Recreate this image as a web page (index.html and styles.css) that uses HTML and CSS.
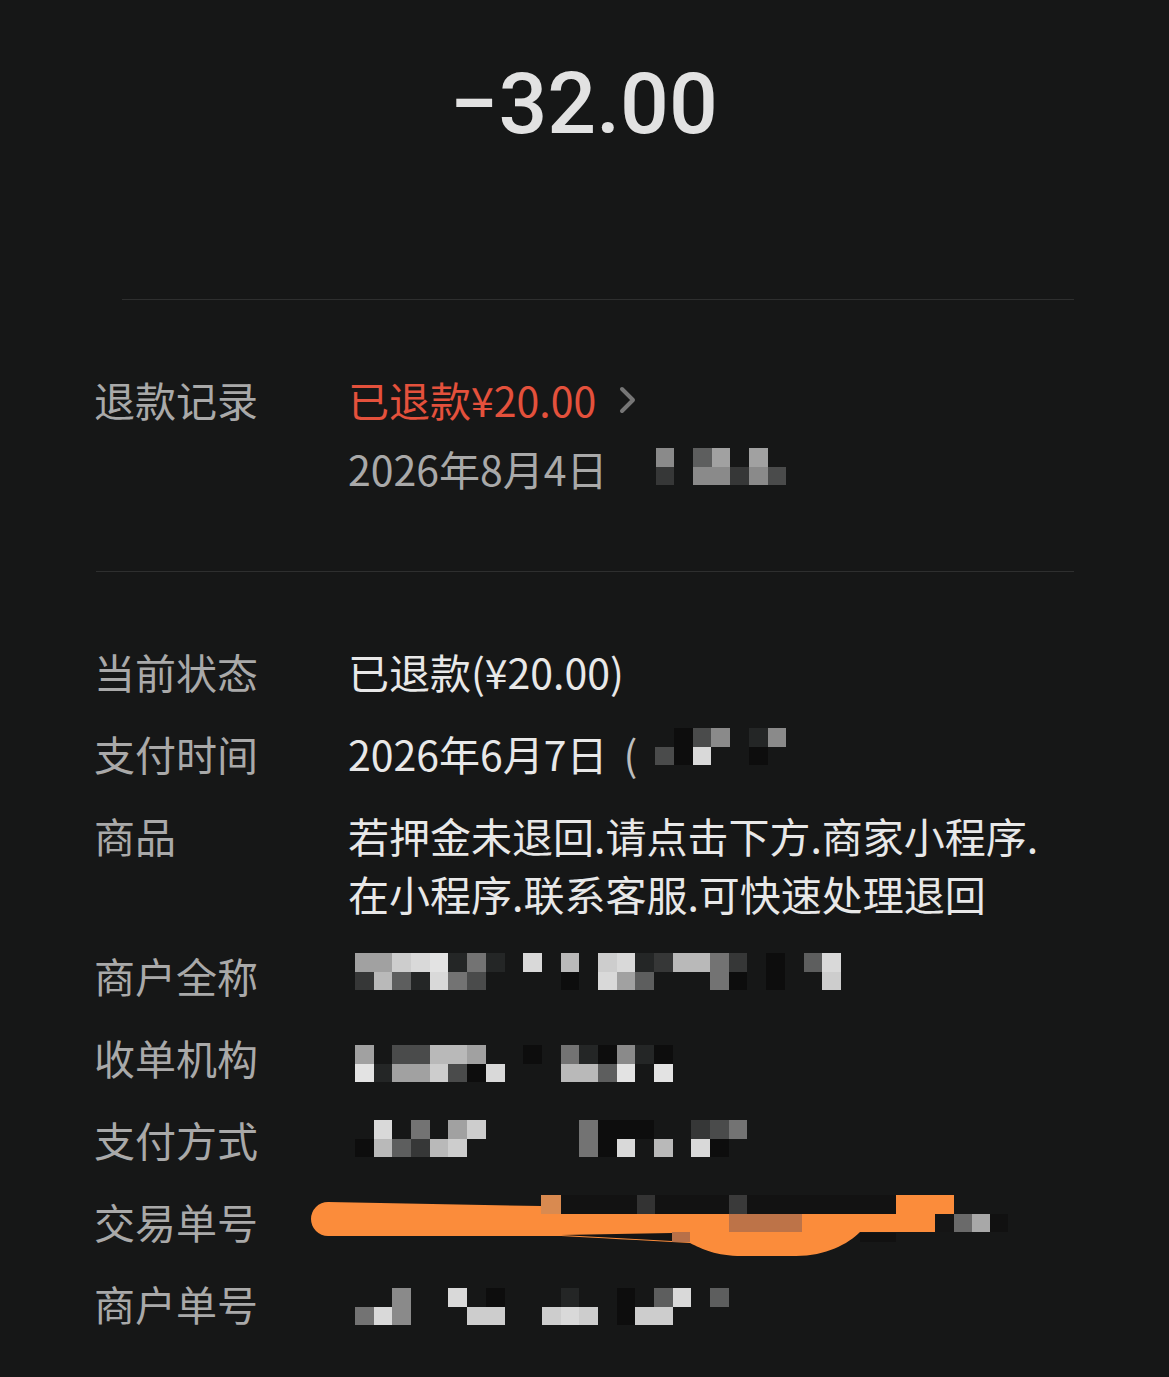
FILE: index.html
```html
<!DOCTYPE html>
<html lang="zh-CN">
<head>
  <meta charset="UTF-8">
  <meta name="viewport" content="width=device-width, initial-scale=1.0">
  <title>账单详情</title>
  <link rel="stylesheet" href="styles.css">
</head>
<body>
  <main class="page">
    <div class="amount">&minus;32.00</div>
    <div class="rule rule-short"></div>

    <section class="refund">
      <div class="row">
        <div class="label">退款记录</div>
        <div class="value">
          <div class="refund-line">
            <span class="red">已退款¥20.00</span>
            <svg class="chevron" width="20" height="30" viewBox="0 0 20 30">
              <polyline points="4,4 15,15 4,26" fill="none" stroke="#767676" stroke-width="4" stroke-linecap="round" stroke-linejoin="round"/>
            </svg>
          </div>
          <div class="date-line muted">
            <span>2026年8月4日</span>
            <span class="mosaic mt9 gap48">
              <i class="g7"></i><i class="g3"></i>
              <i></i><i></i>
              <i class="g5"></i><i class="g7"></i>
              <i class="g8"></i><i class="g7"></i>
              <i></i><i class="g3"></i>
              <i class="g8"></i><i class="g7"></i>
              <i></i><i class="g4"></i>
            </span>
          </div>
        </div>
      </div>
    </section>

    <div class="rule rule-wide"></div>

    <section class="details">
      <div class="row">
        <div class="label">当前状态</div>
        <div class="value">已退款(¥20.00)</div>
      </div>

      <div class="row">
        <div class="label">支付时间</div>
        <div class="value flexv">
          <span>2026年6月7日</span>
          <span class="paren">(</span>
          <span class="mosaic mt4 gap18">
            <i></i><i class="g4"></i>
            <i class="g1"></i><i class="g1"></i>
            <i class="g4"></i><i class="gb"></i>
            <i class="g7"></i><i></i>
            <i></i><i></i>
            <i class="g2"></i><i class="g1"></i>
            <i class="g7"></i><i></i>
          </span>
        </div>
      </div>

      <div class="row">
        <div class="label">商品</div>
        <div class="value">若押金未退回.请点击下方.商家小程序.<br>在小程序.联系客服.可快速处理退回</div>
      </div>

      <div class="row">
        <div class="label">商户全称</div>
        <div class="value flexv">
          <span class="mosaic mt7 lead">
            <i class="g8"></i><i class="g3"></i>
            <i class="g8"></i><i class="g9"></i>
            <i class="ga"></i><i class="g5"></i>
            <i class="gb"></i><i class="g2"></i>
            <i class="gc"></i><i class="gb"></i>
            <i class="g2"></i><i class="g6"></i>
            <i class="g6"></i><i class="g4"></i>
            <i class="g2"></i><i></i>
            <i></i><i></i>
            <i class="gb"></i><i></i>
            <i></i><i></i>
            <i class="g9"></i><i class="g1"></i>
            <i></i><i></i>
            <i class="ga"></i><i class="gb"></i>
            <i class="gb"></i><i class="g8"></i>
            <i class="g2"></i><i class="g5"></i>
            <i class="g3"></i><i></i>
            <i class="g9"></i><i></i>
            <i class="g9"></i><i></i>
            <i class="g6"></i><i class="g6"></i>
            <i class="g3"></i><i class="g1"></i>
            <i></i><i></i>
            <i class="g1"></i><i class="g1"></i>
            <i></i><i></i>
            <i class="g5"></i><i></i>
            <i class="gb"></i><i class="ga"></i>
          </span>
        </div>
      </div>

      <div class="row">
        <div class="label">收单机构</div>
        <div class="value flexv">
          <span class="mosaic mt17 lead">
            <i class="g8"></i><i class="gc"></i>
            <i></i><i class="g2"></i>
            <i class="g4"></i><i class="g8"></i>
            <i class="g4"></i><i class="g8"></i>
            <i class="g9"></i><i class="ga"></i>
            <i class="g9"></i><i class="g4"></i>
            <i class="g8"></i><i class="g1"></i>
            <i></i><i class="gb"></i>
            <i></i><i></i>
            <i class="g1"></i><i></i>
            <i></i><i></i>
            <i class="g6"></i><i class="g9"></i>
            <i class="g2"></i><i class="g9"></i>
            <i class="g1"></i><i class="g5"></i>
            <i class="g7"></i><i class="gc"></i>
            <i class="g2"></i><i></i>
            <i class="g1"></i><i class="gc"></i>
          </span>
        </div>
      </div>

      <div class="row">
        <div class="label">支付方式</div>
        <div class="value flexv">
          <span class="mosaic mt10 lead">
            <i></i><i class="g1"></i>
            <i class="gb"></i><i class="g9"></i>
            <i></i><i class="g5"></i>
            <i class="g6"></i><i class="g3"></i>
            <i></i><i class="g9"></i>
            <i class="g8"></i><i class="ga"></i>
            <i class="ga"></i><i></i>
            <i></i><i></i>
            <i></i><i></i>
            <i></i><i></i>
            <i></i><i></i>
            <i></i><i></i>
            <i class="g6"></i><i class="g6"></i>
            <i class="g1"></i><i class="g1"></i>
            <i class="g1"></i><i class="gb"></i>
            <i class="g1"></i><i></i>
            <i></i><i class="g9"></i>
            <i></i><i></i>
            <i class="g3"></i><i class="gb"></i>
            <i class="g4"></i><i class="g1"></i>
            <i class="g6"></i><i></i>
          </span>
        </div>
      </div>

      <div class="row">
        <div class="label">交易单号</div>
        <div class="value scribbled">
          <svg class="scribble" width="720" height="80" viewBox="300 1185 720 80">
            <rect x="561" y="1195" width="335" height="19" fill="#121212"/>
            <rect x="637" y="1195" width="18" height="19" fill="#333"/>
            <rect x="729" y="1195" width="18" height="19" fill="#3a3a3a"/>
            <path d="M328 1202 L541 1206 L541 1214 L935 1214 L935 1232 L860 1232 C848 1244 826 1256 796 1256 L742 1256 C716 1256 702 1249 690 1243 C640 1240 596 1238 561 1236 L328 1236 A17 17 0 0 1 328 1202 Z" fill="#fb8c3b"/>
            <rect x="541" y="1195" width="20" height="19" fill="#d98a50"/>
            <rect x="896" y="1195" width="58" height="19" fill="#fb8c3b"/>
            <rect x="896" y="1214" width="39" height="18" fill="#fb8c3b"/>
            <rect x="729" y="1214" width="73" height="18" fill="#bd7348"/>
            <polygon points="561,1235 672,1233 672,1241" fill="#141414"/>
            <rect x="672" y="1232" width="18" height="10" fill="#b87048"/>
            <rect x="860" y="1233" width="36" height="9" fill="#111"/>
            <rect x="935" y="1214" width="19" height="18" fill="#151515"/>
            <rect x="954" y="1214" width="18" height="18" fill="#6a6a6a"/>
            <rect x="972" y="1214" width="18" height="18" fill="#a8a8a8"/>
            <rect x="990" y="1214" width="18" height="18" fill="#111"/>
          </svg>
        </div>
      </div>

      <div class="row">
        <div class="label">商户单号</div>
        <div class="value flexv">
          <span class="mosaic mt14 lead">
            <i></i><i class="g6"></i>
            <i></i><i class="gb"></i>
            <i class="g7"></i><i class="g7"></i>
            <i></i><i></i>
            <i></i><i></i>
            <i class="gb"></i><i></i>
            <i></i><i class="ga"></i>
            <i class="g1"></i><i class="ga"></i>
            <i></i><i></i>
            <i></i><i></i>
            <i></i><i class="ga"></i>
            <i class="g2"></i><i class="gb"></i>
            <i></i><i class="ga"></i>
            <i></i><i></i>
            <i class="g1"></i><i class="g1"></i>
            <i></i><i class="ga"></i>
            <i class="g5"></i><i class="ga"></i>
            <i class="gb"></i><i></i>
            <i></i><i></i>
            <i class="g5"></i><i></i>
          </span>
        </div>
      </div>
    </section>
  </main>
</body>
</html>
```

FILE: styles.css
```css
body {
  margin: 0;
  background-color: #161717;
  font-family: "Noto Sans CJK SC", "Noto Sans", sans-serif;
  color: #e6e6e6;
}
.page {
  padding: 0 95px 40px 94px;
}
.amount {
  padding-top: 61px;
  font-family: Roboto, "Noto Sans", sans-serif;
  font-weight: 500;
  font-size: 86px;
  line-height: 86px;
  text-align: center;
  color: #e2e2e2;
}
.rule {
  height: 1px;
  background-color: #2e2f2f;
}
.rule-short {
  margin: 152px 0 0 28px;
}
.rule-wide {
  margin-left: 2px;
}
.refund {
  margin: 70px 0 74px;
}
.details {
  margin-top: 70px;
  display: flex;
  flex-direction: column;
  gap: 24px;
}
.row {
  display: grid;
  grid-template-columns: 254px 1fr;
  font-size: 41px;
  line-height: 58px;
}
.label {
  color: #a9a9a9;
}
.value {
  color: #e8e8e8;
}
.refund-line {
  display: flex;
  align-items: center;
}
.red {
  color: #e4513c;
}
.chevron {
  margin-left: 22px;
  margin-top: 2px;
}
.date-line {
  margin-top: 11px;
  display: flex;
  align-items: flex-start;
}
.muted {
  color: #a9a9a9;
}
.flexv {
  display: flex;
  align-items: flex-start;
  min-height: 58px;
}
.paren {
  margin-left: 16px;
  color: #bdbdbd;
}

/* pixelated (censored) blocks */
.mosaic {
  display: inline-grid;
  grid-template-rows: 18.5px 18.5px;
  grid-auto-columns: 18.7px;
  grid-auto-flow: column;
}
.mosaic i {
  display: block;
}
.lead { margin-left: 7px; }
.gap48 { margin-left: 48px; }
.gap18 { margin-left: 18px; }
.mt4 { margin-top: 4px; }
.mt7 { margin-top: 7px; }
.mt9 { margin-top: 9px; }
.mt10 { margin-top: 10px; }
.mt14 { margin-top: 14px; }
.mt17 { margin-top: 17px; }
.g1 { background: #0d0d0d; }
.g2 { background: #242626; }
.g3 { background: #363737; }
.g4 { background: #4a4b4b; }
.g5 { background: #5d5e5e; }
.g6 { background: #737373; }
.g7 { background: #8a8a8a; }
.g8 { background: #a1a1a1; }
.g9 { background: #b9b9b9; }
.ga { background: #cdcdcd; }
.gb { background: #d9d9d9; }
.gc { background: #e3e3e3; }

.scribbled {
  position: relative;
  min-height: 58px;
}
.scribble {
  position: absolute;
  left: -48px;
  top: -7px;
}
```
